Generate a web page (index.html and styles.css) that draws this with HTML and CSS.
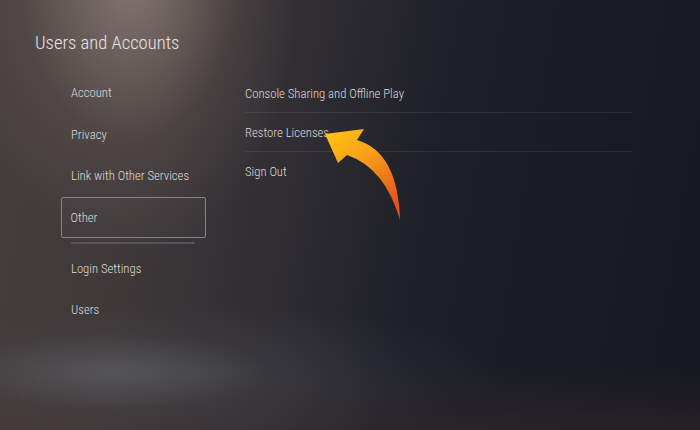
FILE: index.html
```html
<!DOCTYPE html>
<html lang="en">
<head>
<meta charset="utf-8">
<title>Users and Accounts</title>
<link rel="stylesheet" href="styles.css">
</head>
<body>
<div class="screen">
  <h1 class="title">Users and Accounts</h1>
  <div class="columns">
    <nav class="side">
      <div class="side-item">Account</div>
      <div class="side-item">Privacy</div>
      <div class="side-item">Link with Other Services</div>
      <div class="side-item selected">Other</div>
      <div class="side-sep"></div>
      <div class="side-item">Login Settings</div>
      <div class="side-item">Users</div>
    </nav>
    <div class="list">
      <div class="list-item">Console Sharing and Offline Play</div>
      <div class="list-item">Restore Licenses</div>
      <div class="list-item last">Sign Out</div>
    </div>
  </div>
  <svg class="arrow" width="90" height="100" viewBox="0 0 90 100">
    <defs>
      <linearGradient id="ag" x1="0" y1="0" x2="0.6" y2="1">
        <stop offset="0" stop-color="#ffc70f"/>
        <stop offset="0.45" stop-color="#f8a01a"/>
        <stop offset="1" stop-color="#e4561c"/>
      </linearGradient>
    </defs>
    <path d="M5 9 L44 4 L37 15 Q78 27 80 95 Q65 43 27 30 L18 38 Z" fill="url(#ag)"/>
  </svg>
</div>
</body>
</html>
```
FILE: styles.css
```css
html, body {
  margin: 0;
  padding: 0;
}
body {
  width: 700px;
  height: 430px;
  overflow: hidden;
  font-family: "Roboto Condensed", "Liberation Sans Narrow", Roboto, sans-serif;
  font-weight: 300;
  color: #dedcdc;
}
.screen {
  position: relative;
  width: 700px;
  height: 430px;
  box-sizing: border-box;
  padding: 31px 0 0 35px;
  background:
    radial-gradient(ellipse 110px 170px at 130px -30px, rgba(175,155,148,0.45), rgba(175,155,148,0) 100%),
    radial-gradient(ellipse 170px 260px at 130px -10px, rgba(140,122,115,0.42), rgba(140,122,115,0.18) 60%, rgba(140,122,115,0) 100%),
    radial-gradient(ellipse 150px 38px at 115px 372px, rgba(110,115,122,0.4), rgba(110,115,122,0) 100%),
    radial-gradient(ellipse 300px 70px at 200px 375px, rgba(90,92,98,0.3), rgba(90,92,98,0) 100%),
    linear-gradient(to bottom, rgba(0,0,0,0) 85%, rgba(70,55,55,0.3) 100%),
    linear-gradient(100deg, #463f3f 0%, #3e3839 22%, #2f2d32 42%, #1e1f27 60%, #16171f 100%);
}
.title {
  margin: 0;
  font-weight: 300;
  font-size: 18.6px;
  line-height: 24px;
  color: #e8e6e6;
}
.columns {
  display: flex;
  margin-top: 17px;
  margin-left: 26px;
}
.side {
  width: 145px;
  display: flex;
  flex-direction: column;
}
.side-item {
  height: 41.5px;
  display: flex;
  align-items: center;
  padding-left: 10px;
  font-size: 12.7px;
  box-sizing: border-box;
}
.side-item.selected {
  height: 41px;
  border: 1.5px solid #85848d;
  border-radius: 2px;
  padding-left: 8.5px;
  background: rgba(255,255,255,0.02);
}
.side-sep {
  height: 2px;
  margin: 4px 11px 4px 10px;
  background: #55545a;
}
.list {
  margin-left: 39px;
  margin-top: 2px;
  width: 387px;
  display: flex;
  flex-direction: column;
}
.list-item {
  height: 39px;
  display: flex;
  align-items: center;
  font-size: 12.7px;
  border-bottom: 1px solid rgba(255,255,255,0.07);
  box-sizing: border-box;
}
.list-item.last {
  border-bottom: none;
}
.arrow {
  position: absolute;
  left: 320px;
  top: 125px;
}
```
